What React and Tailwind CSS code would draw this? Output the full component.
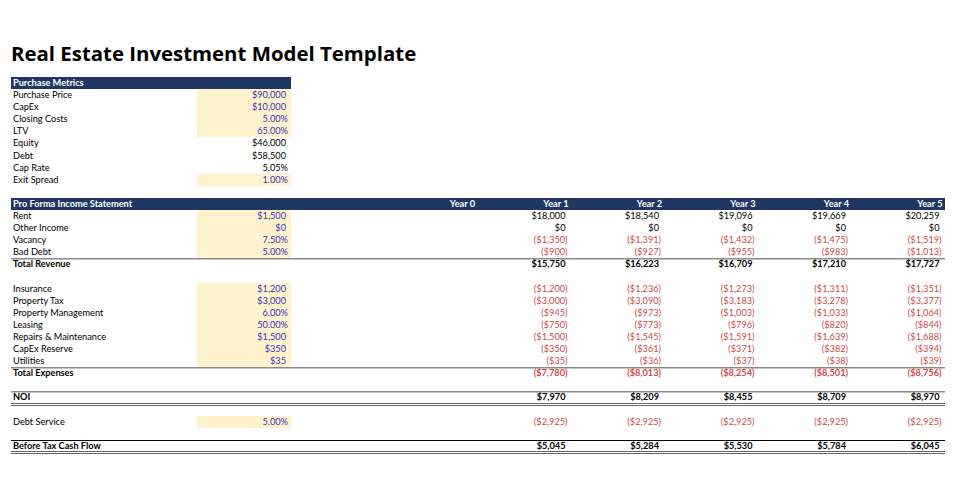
const COLS = 'grid grid-cols-[186px_94px_92.5px_repeat(6,93.5px)]';
const ROW = 'h-[12.1px] leading-[12.1px]';

const RED = 'text-[#cc4a4a]';
const BLUE = 'text-[#3b33c0]';

const purchase = [
  ['Purchase Price', '$90,000', true],
  ['CapEx', '$10,000', true],
  ['Closing Costs', '5.00%', true],
  ['LTV', '65.00%', true],
  ['Equity', '$46,000', false],
  ['Debt', '$58,500', false],
  ['Cap Rate', '5.05%', false],
  ['Exit Spread', '1.00%', true],
];

const proForma = [
  { label: 'Rent', input: '$1,500', years: ['$18,000', '$18,540', '$19,096', '$19,669', '$20,259'] },
  { label: 'Other Income', input: '$0', years: ['$0', '$0', '$0', '$0', '$0'] },
  { label: 'Vacancy', input: '7.50%', years: ['($1,350)', '($1,391)', '($1,432)', '($1,475)', '($1,519)'] },
  { label: 'Bad Debt', input: '5.00%', years: ['($900)', '($927)', '($955)', '($983)', '($1,013)'] },
  { label: 'Total Revenue', bold: true, line: 'gray', years: ['$15,750', '$16,223', '$16,709', '$17,210', '$17,727'] },
  { blank: true },
  { label: 'Insurance', input: '$1,200', years: ['($1,200)', '($1,236)', '($1,273)', '($1,311)', '($1,351)'] },
  { label: 'Property Tax', input: '$3,000', years: ['($3,000)', '($3,090)', '($3,183)', '($3,278)', '($3,377)'] },
  { label: 'Property Management', input: '6.00%', years: ['($945)', '($973)', '($1,003)', '($1,033)', '($1,064)'] },
  { label: 'Leasing', input: '50.00%', years: ['($750)', '($773)', '($796)', '($820)', '($844)'] },
  { label: 'Repairs & Maintenance', input: '$1,500', years: ['($1,500)', '($1,545)', '($1,591)', '($1,639)', '($1,688)'] },
  { label: 'CapEx Reserve', input: '$350', years: ['($350)', '($361)', '($371)', '($382)', '($394)'] },
  { label: 'Utilities', input: '$35', years: ['($35)', '($36)', '($37)', '($38)', '($39)'] },
  { label: 'Total Expenses', bold: true, line: 'gray', years: ['($7,780)', '($8,013)', '($8,254)', '($8,501)', '($8,756)'] },
  { blank: true },
  { label: 'NOI', bold: true, line: 'grayDouble', years: ['$7,970', '$8,209', '$8,455', '$8,709', '$8,970'] },
  { blank: true },
  { label: 'Debt Service', input: '5.00%', years: ['($2,925)', '($2,925)', '($2,925)', '($2,925)', '($2,925)'] },
  { blank: true },
  { label: 'Before Tax Cash Flow', bold: true, line: 'blackDouble', years: ['$5,045', '$5,284', '$5,530', '$5,784', '$6,045'] },
];

// borders drawn as shadows so the 12px row pitch stays put
const LINES = {
  gray: 'shadow-[inset_0_1.5px_0_#8a8a8a]',
  grayDouble: 'shadow-[inset_0_1.5px_0_#8a8a8a,inset_0_-1px_0_#666,0_1px_0_#fff,0_2px_0_#666]',
  blackDouble: 'shadow-[inset_0_1px_0_#000,inset_0_-1px_0_#666,0_1px_0_#fff,0_2px_0_#666]',
};

function Value({ v, input, bold, className = '' }) {
  const isNeg = v.startsWith('(');
  const isCur = v.startsWith('$');
  const color = input ? BLUE : isNeg ? RED : 'text-black';
  return (
    <div className={`text-right ${isCur ? 'pr-[5px]' : 'pr-[3px]'} ${color} ${bold ? 'font-bold' : ''} ${className}`}>
      {v}
    </div>
  );
}

function ProRow({ row }) {
  if (row.blank) return <div className={ROW} />;
  const line = row.line ? LINES[row.line] : '';
  return (
    <div className={`${COLS} ${ROW} ${line}`}>
      <div className={`pl-[2px] ${row.bold ? 'font-bold' : ''} whitespace-nowrap`}>{row.label}</div>
      {row.input ? <Value v={row.input} input className="bg-[#fff2cc]" /> : <div />}
      <div />
      <div />
      {row.years.map((v, i) => (
        <Value key={i} v={v} bold={row.bold} />
      ))}
    </div>
  );
}

export default function App() {
  return (
    <div className="min-h-[477px] w-[960px] bg-white px-[11px] pt-[41px] text-[9.2px] text-black [font-family:Lato,'Liberation_Sans',sans-serif]">
      <h1 className="h-[24px] text-[20.4px] font-bold leading-[24px] [font-family:'Open_Sans',sans-serif]">
        Real Estate Investment Model Template
      </h1>

      <div className="mt-[12px] w-[280px]">
        <div className={`${ROW} bg-[#203764] pl-[2px] font-bold text-white`}>Purchase Metrics</div>
        {purchase.map(([label, v, input]) => (
          <div key={label} className={`grid grid-cols-[186px_94px] ${ROW}`}>
            <div className="pl-[2px]">{label}</div>
            <Value v={v} input={input} className={input ? 'bg-[#fff2cc]' : ''} />
          </div>
        ))}
        <div className={ROW} />
      </div>

      <div className="w-[933.5px]">
        <div className={`${COLS} ${ROW} bg-[#203764] font-bold text-white`}>
          <div className="pl-[2px] whitespace-nowrap">Pro Forma Income Statement</div>
          <div />
          <div />
          {['Year 0', 'Year 1', 'Year 2', 'Year 3', 'Year 4', 'Year 5'].map((y) => (
            <div key={y} className="pr-[2px] text-right">
              {y}
            </div>
          ))}
        </div>
        {proForma.map((row, i) => (
          <ProRow key={i} row={row} />
        ))}
      </div>
    </div>
  );
}
